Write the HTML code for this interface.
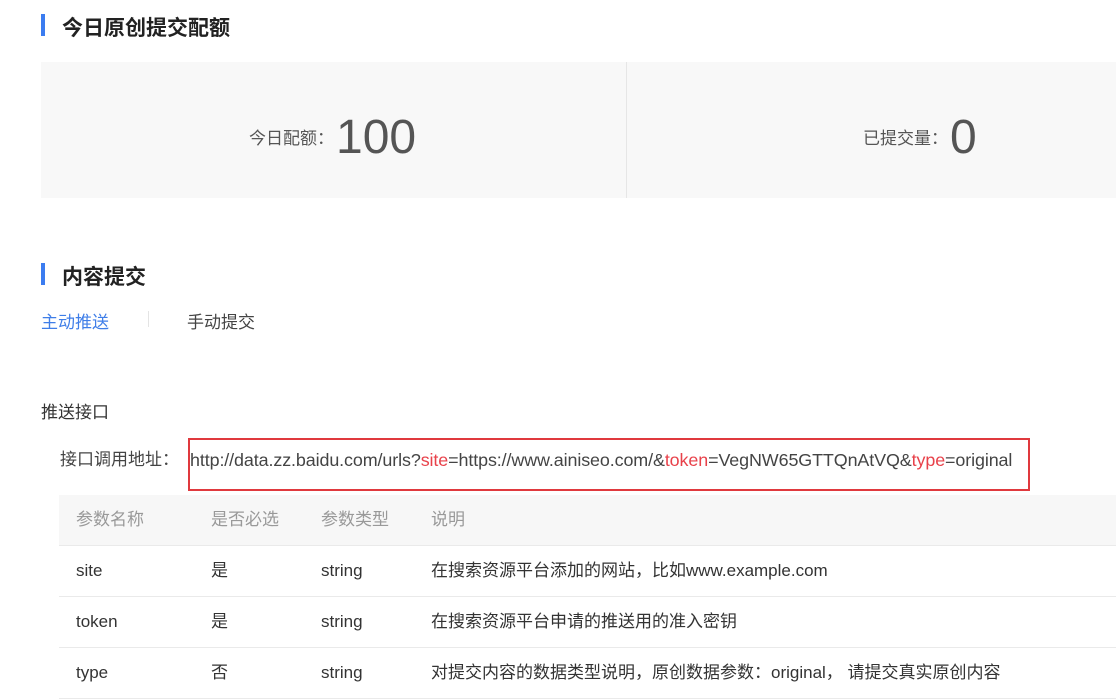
<!DOCTYPE html>
<html><head><meta charset="utf-8"><style>
body{margin:0;width:1116px;height:699px;overflow:hidden;background:#fff;font-family:"Liberation Sans","Noto Sans CJK SC",sans-serif;color:#333;position:relative}
.a{position:absolute;white-space:nowrap}
.bar{position:absolute;left:41px;width:4px;height:22px;background:#3b7cf0}
.h{font-size:21px;font-weight:bold;color:#222}
.r{color:#e8414a}
.row{position:absolute;left:59px;width:1057px;height:50px;line-height:50px;border-bottom:1px solid #eaeaea;font-size:17px;white-space:nowrap}
.row span{display:inline-block;vertical-align:baseline}
.c1{margin-left:17px;width:135px}.c2{width:110px}.c3{width:110px}
.lb{font-size:17px;vertical-align:middle;display:inline-block;line-height:20px;position:relative;top:-10px}
</style></head><body>
<div class="bar" style="top:14px"></div>
<div class="a h" style="left:62px;top:12px">今日原创提交配额</div>
<div class="a" style="left:41px;top:62px;width:1075px;height:136px;background:#f8f8f8"></div>
<div class="a" style="left:626px;top:62px;width:1px;height:136px;background:#e6e6e6"></div>
<div class="a" style="left:249px;top:110px;line-height:56px;color:#555"><span class="lb">今日配额：</span><span style="font-size:48px;margin-left:2px">100</span></div>
<div class="a" style="left:863px;top:110px;line-height:56px;color:#555"><span class="lb">已提交量：</span><span style="font-size:48px;margin-left:2px">0</span></div>
<div class="bar" style="top:263px"></div>
<div class="a h" style="left:62px;top:261px">内容提交</div>
<div class="a" style="left:41px;top:308px;font-size:17px;color:#3f7ee8">主动推送</div>
<div class="a" style="left:148px;top:311px;width:1px;height:16px;background:#e4e4e4"></div>
<div class="a" style="left:187px;top:308px;font-size:17px;color:#444">手动提交</div>
<div class="a" style="left:41px;top:398px;font-size:17px;color:#333">推送接口</div>
<div class="a" style="left:188px;top:438px;width:838px;height:49px;border:2px solid #e0393e"></div>
<div class="a" style="left:60px;top:440px;line-height:40px;font-size:17px;color:#444">接口调用地址：</div>
<div class="a" style="left:190px;top:440px;line-height:40px;font-size:17.9px;color:#444;letter-spacing:-0.1px">http://data.zz.baidu.com/urls?<span class="r">site</span>=https://www.ainiseo.com/&amp;<span class="r">token</span>=VegNW65GTTQnAtVQ&amp;<span class="r">type</span>=original</div>
<div class="row" style="top:495px;background:#f7f7f7;color:#999"><span class="c1">参数名称</span><span class="c2">是否必选</span><span class="c3">参数类型</span><span>说明</span></div>
<div class="row" style="top:546px"><span class="c1">site</span><span class="c2">是</span><span class="c3">string</span><span>在搜索资源平台添加的网站，比如www.example.com</span></div>
<div class="row" style="top:597px"><span class="c1">token</span><span class="c2">是</span><span class="c3">string</span><span>在搜索资源平台申请的推送用的准入密钥</span></div>
<div class="row" style="top:648px"><span class="c1">type</span><span class="c2">否</span><span class="c3">string</span><span>对提交内容的数据类型说明，原创数据参数：original， 请提交真实原创内容</span></div>
</body></html>
